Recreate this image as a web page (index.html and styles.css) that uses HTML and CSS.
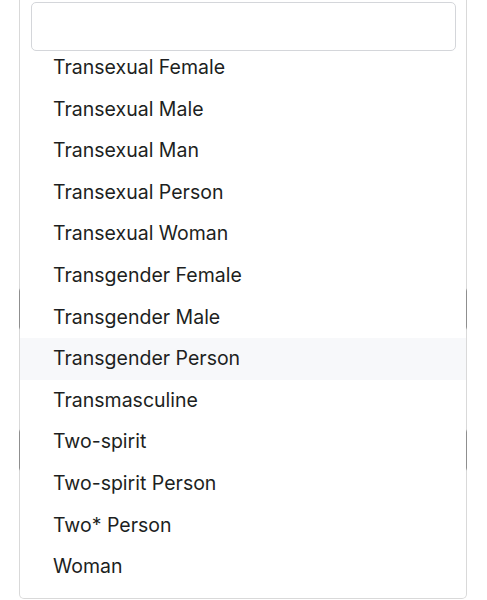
FILE: index.html
```html
<!DOCTYPE html>
<html lang="en">
  <head>
    <meta charset="UTF-8" />
    <meta name="viewport" content="width=device-width, initial-scale=1.0" />
    <title>Gender Identity</title>
    <link rel="stylesheet" href="styles.css">
  </head>
  <body>
    <div class="page">
      <form class="profile-form">
        <div class="field"></div>
        <div class="field"></div>
      </form>

      <div class="dropdown">
        <div class="search-box">
          <input class="search-input" type="text" aria-label="Search" />
        </div>
        <ul class="options">
          <li class="option">Transexual Female</li>
          <li class="option">Transexual Male</li>
          <li class="option">Transexual Man</li>
          <li class="option">Transexual Person</li>
          <li class="option">Transexual Woman</li>
          <li class="option">Transgender Female</li>
          <li class="option">Transgender Male</li>
          <li class="option active">Transgender Person</li>
          <li class="option">Transmasculine</li>
          <li class="option">Two-spirit</li>
          <li class="option">Two-spirit Person</li>
          <li class="option">Two* Person</li>
          <li class="option">Woman</li>
        </ul>
      </div>
    </div>
  </body>
</html>
```

FILE: styles.css
```css
* {
  margin: 0;
  padding: 0;
  box-sizing: border-box;
  font-family: Inter, "Liberation Sans", sans-serif;
}

body {
  background: white;
  overflow: hidden;
}

.page {
  position: relative;
  height: 600px;
}

.profile-form {
  padding: 287px 20px 0 19px;
}

.field {
  height: 44px;
  border: 1px solid #a9a9a9;
  border-radius: 4px;
  margin-bottom: 97px;
}

.dropdown {
  position: absolute;
  top: -10px;
  left: 19px;
  width: 448px;
  background: white;
  background-clip: padding-box;
  border: 1px solid rgba(0, 0, 0, 0.15);
  border-radius: 5px;
  padding-bottom: 10px;
}

.search-box {
  padding: 11px 10px 0 11px;
}

.search-input {
  display: block;
  width: 100%;
  height: 49px;
  border: 1px solid #d4d6da;
  border-radius: 5px;
  background: white;
  font-size: 18px;
  padding: 0 12px;
  outline: none;
}

.options {
  list-style: none;
  margin-top: -4px;
}

.option {
  padding: 10px 33px;
  font-size: 19.5px;
  line-height: 21.6px;
  color: #1d1f22;
}

.option.active {
  background: #f7f8fa;
}
```
